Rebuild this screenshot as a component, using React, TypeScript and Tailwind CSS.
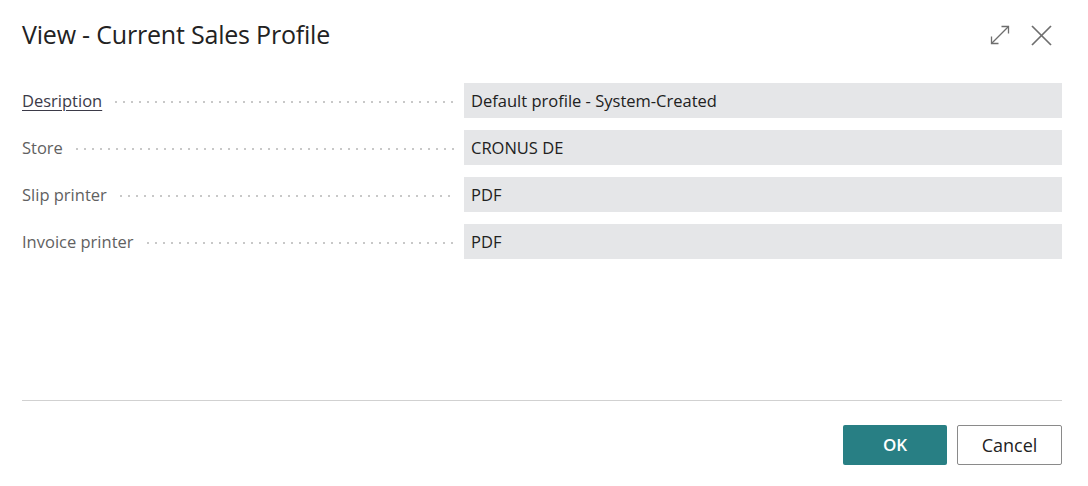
const fields = [
    {label: 'Desription', value: 'Default profile - System-Created', link: true},
    {label: 'Store', value: 'CRONUS DE'},
    {label: 'Slip printer', value: 'PDF'},
    {label: 'Invoice printer', value: 'PDF'},
];

const FieldRow = ({label, value, link}: {label: string; value: string; link?: boolean}) => (
    <div className="flex items-center h-[35px] pt-[2px]">
        <div className="w-[442px] flex items-center pr-[8px]">
            <span
                className={
                    link
                        ? 'text-[#3b3a48] underline underline-offset-[3px] decoration-[#3b3a48]'
                        : 'text-[#616161]'
                }
            >
                {label}
            </span>
            <span className="flex-1 ml-[10px] h-[4px] bg-[radial-gradient(circle,#c8c8c8_0.9px,transparent_1.3px)] bg-[length:8px_4px] bg-repeat-x" />
        </div>
        <div className="flex-1 self-stretch -mt-[2px] bg-[#e5e6e8] flex items-center pt-[2px] px-[7px] text-[#212121]">
            {value}
        </div>
    </div>
);

export default function App() {
    return (
        <div className="w-[1088px] h-[486px] bg-white font-['Open_Sans','Noto_Sans',sans-serif] text-[16.5px] flex flex-col pl-[22px] pr-[26px]">
            <div className="flex items-center justify-between h-[70px]">
                <h1 className="text-[25px] text-[#222] tracking-[-0.2px]">View - Current Sales Profile</h1>
                <div className="flex items-center gap-[21px] text-[#6e6e6e] pr-[10px]">
                    <svg width="20" height="20" viewBox="0 0 20 20" fill="none" stroke="currentColor" strokeWidth="1.3">
                        <path d="M1.5 18.5 18.5 1.5" />
                        <path d="M11.5 1.5h7v7" />
                        <path d="M1.5 11.5v7h7" />
                    </svg>
                    <svg width="21" height="21" viewBox="0 0 21 21" fill="none" stroke="currentColor" strokeWidth="1.7">
                        <path d="M1 1 20 20" />
                        <path d="M20 1 1 20" />
                    </svg>
                </div>
            </div>
            <div className="flex flex-col gap-[12px] mt-[13px]">
                {fields.map(f => (
                    <FieldRow key={f.label} {...f} />
                ))}
            </div>
            <div className="flex-1" />
            <div className="border-t border-[#d1d1d1]" />
            <div className="flex justify-end gap-[10px] pt-[24px] pb-[21px]">
                <button className="w-[104px] h-[40px] rounded-[2px] bg-[#287f84] text-white font-semibold text-[17px]">
                    OK
                </button>
                <button className="w-[105px] h-[40px] rounded-[2px] border border-[#8a8a8a] bg-white text-[#222] text-[18px]">
                    Cancel
                </button>
            </div>
        </div>
    );
}
